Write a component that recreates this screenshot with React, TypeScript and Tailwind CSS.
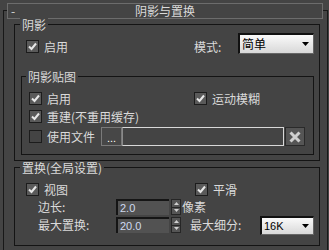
import React from 'react';

function Check({ on = false }: { on?: boolean }) {
    return (
        <span
            className={`flex h-[13px] w-[13px] shrink-0 items-center justify-center border border-[#1c1c1c] ${on ? 'bg-[#5a5a5a]' : 'bg-[#444]'}`}
        >
            {on && (
                <svg width="9" height="9" viewBox="0 0 9 9">
                    <path d="M1 4.5 L3.5 7 L8 1.5" stroke="#e8e8e8" strokeWidth="2" fill="none" />
                </svg>
            )}
        </span>
    );
}

function Select({ value, className }: { value: string; className: string }) {
    return (
        <div
            className={`flex items-center justify-between border-l-2 border-t-2 border-b border-r border-[#111] border-b-[#666] border-r-[#666] bg-linear-to-b from-[#fafafa] to-[#d8d8d8] pl-[2px] pr-[4px] text-black ${className}`}
        >
            <span>{value}</span>
            <svg width="7" height="4" viewBox="0 0 7 4">
                <path d="M0 0H7L3.5 4Z" fill="#000" />
            </svg>
        </div>
    );
}

function Num({ v }: { v: string }) {
    return (
        <div className="flex h-[16px] w-[53px] items-center border-l-2 border-t-2 border-[#151515] bg-[#525252] pl-[2px] font-['Liberation_Sans',sans-serif] text-[11px] text-[#cfdaf0]">
            {v}
        </div>
    );
}

function Spinner() {
    return (
        <span className="ml-[2px] flex h-[16px] w-[10px] flex-col border border-[#262626] bg-[#555]">
            <span className="flex flex-1 items-center justify-center border-b border-[#262626]">
                <svg width="5" height="3" viewBox="0 0 5 3">
                    <path d="M0 3L2.5 0L5 3Z" fill="#d0d0d0" />
                </svg>
            </span>
            <span className="flex flex-1 items-center justify-center">
                <svg width="5" height="3" viewBox="0 0 5 3">
                    <path d="M0 0H5L2.5 3Z" fill="#d0d0d0" />
                </svg>
            </span>
        </span>
    );
}

export default function App() {
    return (
        <div className="h-[250px] w-[329px] overflow-hidden bg-[#444] pl-[3px] pt-[10px] font-['Noto_Sans_CJK_SC','Noto_Sans',sans-serif] text-[12px] leading-[14px] text-[#dadada]">
            <div className="h-[260px] w-[325px] border-x border-t border-[#181818]">
                {/* rollout title */}
                <div className="-mt-[8px] ml-[3px] flex h-[16px] w-[316px] items-center border border-[#6c6c6c] bg-[#444] px-[3px]">
                    <span className="w-[10px]">-</span>
                    <span className="flex-1 text-center">阴影与置换</span>
                    <span className="w-[10px]" />
                </div>

                {/* 阴影 */}
                <div className="ml-[10px] mt-[5px] w-[306px] border border-[#141414] pb-[5px]">
                    <div className="-mt-[7px] ml-[5px] w-fit bg-[#444] px-[2px]">阴影</div>
                    <div className="mt-[1px] flex h-[22px] items-start pl-[11px]">
                        <div className="mt-[7px] flex h-[13px] w-[168px] items-center gap-[5px]">
                            <Check on />
                            <span>启用</span>
                        </div>
                        <div className="mt-[7px] flex h-[13px] w-[44px] items-center">模式:</div>
                        <Select value="简单" className="h-[21px] w-[76px]" />
                    </div>

                    {/* 阴影贴图 */}
                    <div className="ml-[6px] mt-[21px] w-[293px] border border-[#141414] pb-[8px]">
                        <div className="-mt-[7px] ml-[4px] w-fit bg-[#444] px-[2px]">阴影贴图</div>
                        <div className="mt-[8px] flex h-[13px] items-center pl-[7px]">
                            <div className="flex w-[165px] items-center gap-[5px]">
                                <Check on />
                                <span>启用</span>
                            </div>
                            <div className="flex items-center gap-[5px]">
                                <Check on />
                                <span>运动模糊</span>
                            </div>
                        </div>
                        <div className="mt-[5px] flex h-[13px] items-center gap-[5px] pl-[7px]">
                            <Check on />
                            <span>重建(不重用缓存)</span>
                        </div>
                        <div className="mt-[4px] flex h-[19px] items-center pl-[7px]">
                            <div className="flex w-[72px] items-center gap-[5px]">
                                <Check />
                                <span>使用文件</span>
                            </div>
                            <div className="flex h-[19px] w-[21px] items-end justify-center border border-[#7a7a7a] bg-[#474747] pb-[3px] font-['Liberation_Sans',sans-serif] text-[11px] leading-[8px] text-white">
                                ...
                            </div>
                            <div className="h-[19px] w-[162px] border border-[#d8d8d8] border-l-[#8a8a8a] bg-[#444]" />
                            <div className="ml-[1px] flex h-[19px] w-[20px] items-center justify-center border border-[#2a2a2a] bg-[#555]">
                                <svg width="12" height="12" viewBox="0 0 12 12">
                                    <path d="M1.5 1.5L10.5 10.5M10.5 1.5L1.5 10.5" stroke="#cfcfcf" strokeWidth="3" />
                                </svg>
                            </div>
                        </div>
                    </div>
                </div>

                {/* 置换 */}
                <div className="ml-[10px] mt-[6px] w-[306px] border border-[#141414] pb-[12px]">
                    <div className="-mt-[7px] ml-[5px] w-fit bg-[#444] px-[2px]">置换(全局设置)</div>
                    <div className="mt-[8px] flex h-[13px] items-center pl-[11px]">
                        <div className="flex w-[169px] items-center gap-[5px]">
                            <Check on />
                            <span>视图</span>
                        </div>
                        <div className="flex items-center gap-[5px]">
                            <Check on />
                            <span>平滑</span>
                        </div>
                    </div>
                    <div className="mt-[3px] flex h-[16px] items-center pl-[23px]">
                        <span className="w-[78px]">边长:</span>
                        <Num v="2.0" />
                        <Spinner />
                        <span className="ml-[1px]">像素</span>
                    </div>
                    <div className="mt-[2px] flex h-[16px] items-center pl-[23px]">
                        <span className="w-[78px]">最大置换:</span>
                        <Num v="20.0" />
                        <Spinner />
                        <span className="ml-[9px] w-[70px]">最大细分:</span>
                        <Select value="16K" className="h-[19px] w-[54px] font-['Liberation_Sans',sans-serif] text-[11px]" />
                    </div>
                </div>
            </div>
        </div>
    );
}
